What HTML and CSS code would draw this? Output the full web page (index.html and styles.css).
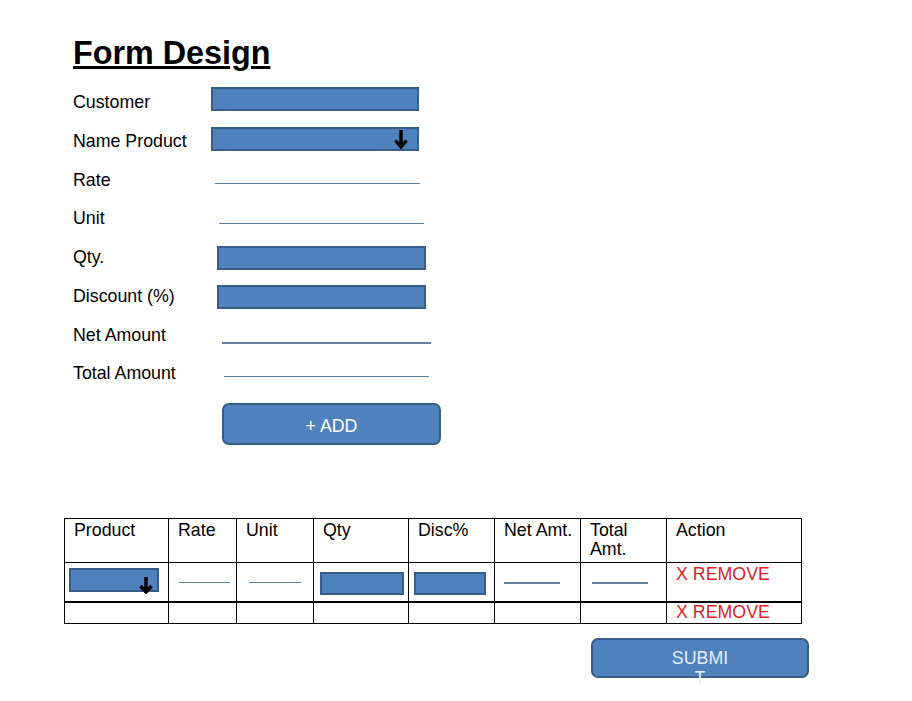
FILE: index.html
```html
<!DOCTYPE html>
<html lang="en">
<head>
<meta charset="utf-8">
<title>Form Design</title>
<link rel="stylesheet" href="styles.css">
</head>
<body>
<div class="page">
  <section class="top">
    <h1 class="title">Form Design</h1>
    <div class="form">
      <div class="row"><span class="label">Customer</span><span class="box f-customer"></span></div>
      <div class="row"><span class="label">Name Product</span>
        <span class="box select f-product">
          <svg class="arrow" width="14" height="20" viewBox="0 0 14 20"><path d="M7 1V18M1.5 11.5L7 18L12.5 11.5" fill="none" stroke="#000" stroke-width="3.4"/></svg>
        </span>
      </div>
      <div class="row"><span class="label">Rate</span><span class="line f-rate"></span></div>
      <div class="row"><span class="label">Unit</span><span class="line f-unit"></span></div>
      <div class="row"><span class="label">Qty.</span><span class="box f-qty"></span></div>
      <div class="row"><span class="label">Discount (%)</span><span class="box f-disc"></span></div>
      <div class="row"><span class="label">Net Amount</span><span class="line thick f-net"></span></div>
      <div class="row"><span class="label">Total Amount</span><span class="line f-total"></span></div>
    </div>
    <button class="btn btn-add" type="button">+ ADD</button>
  </section>

  <table class="grid">
    <colgroup>
      <col class="c-product"><col class="c-rate"><col class="c-unit"><col class="c-qty"><col class="c-disc"><col class="c-net"><col class="c-total"><col class="c-action">
    </colgroup>
    <thead>
      <tr>
        <th>Product</th><th>Rate</th><th>Unit</th><th>Qty</th><th>Disc%</th><th>Net Amt.</th><th>Total Amt.</th><th>Action</th>
      </tr>
    </thead>
    <tbody>
      <tr class="r-first">
        <td><span class="box select t-product">
          <svg class="arrow sm" width="14" height="17" viewBox="0 0 14 17"><path d="M7 0V15M1.5 9L7 15L12.5 9" fill="none" stroke="#000" stroke-width="3.4"/></svg>
        </span></td>
        <td><span class="line t-rate"></span></td>
        <td><span class="line t-unit"></span></td>
        <td><span class="box t-qty"></span></td>
        <td><span class="box t-disc"></span></td>
        <td><span class="line thick t-net"></span></td>
        <td><span class="line thick t-total"></span></td>
        <td class="act">X REMOVE</td>
      </tr>
      <tr class="r-second">
        <td></td><td></td><td></td><td></td><td></td><td></td><td></td>
        <td class="act">X REMOVE</td>
      </tr>
    </tbody>
  </table>

  <button class="btn btn-submit" type="button"><span class="btn-text">SUBMIT</span></button>
</div>
</body>
</html>
```

FILE: styles.css
```css
* { box-sizing: border-box; }

html, body {
  margin: 0;
  background: #fff;
}

body {
  font-family: "Liberation Sans", Arial, sans-serif;
  font-size: 17.8px;
  line-height: 20px;
  color: #000;
}

.page {
  padding: 35px 0 24px 64px;
}

.top {
  padding-left: 9px;
}

.title {
  margin: 0;
  font-size: 32.3px;
  line-height: 36px;
  font-weight: bold;
  text-decoration: underline;
  text-decoration-thickness: 3px;
  text-underline-offset: 2px;
}

.form {
  margin-top: 21px;
}

.row {
  display: grid;
  grid-template-columns: 138px auto;
  align-items: start;
  height: 38.75px;
}

.label {
  display: block;
  white-space: nowrap;
}

.box {
  display: block;
  background: #4f81bd;
  border: 2px solid #385d8a;
}

.line {
  display: block;
  height: 1px;
  background: #5f7f9f;
}

.line.thick {
  height: 2px;
}

.select {
  display: flex;
  justify-content: flex-end;
  align-items: center;
}

.arrow {
  display: block;
  flex: none;
}

/* top form fields */
.f-customer { width: 208px; height: 24px; margin-top: -5px; }
.f-product  { width: 208px; height: 24px; margin-top: -4px; padding-right: 9px; }
.f-rate     { width: 205px; margin-top: 13px; margin-left: 4px; }
.f-unit     { width: 205px; margin-top: 15px; margin-left: 8px; }
.f-qty      { width: 209px; height: 24px; margin-top: -1px; margin-left: 6px; }
.f-disc     { width: 209px; height: 24px; margin-top: -1px; margin-left: 6px; }
.f-net      { width: 209px; margin-top: 17px; margin-left: 11px; }
.f-total    { width: 205px; margin-top: 13px; margin-left: 13px; }

.btn {
  display: block;
  background: #4f81bd;
  border: 2px solid #385d8a;
  border-radius: 7px;
  color: #fff;
  font-family: "Liberation Sans", Arial, sans-serif;
  font-size: 17.8px;
  line-height: 20px;
  padding: 0;
  cursor: pointer;
}

.btn-add {
  width: 219px;
  height: 42px;
  margin: 1px 0 0 149px;
  padding: 3px 0 0 0;
}

/* table */
.grid {
  margin-top: 73px;
  border-collapse: collapse;
  table-layout: fixed;
  width: 737px;
}

.c-product { width: 104px; }
.c-rate    { width: 68px; }
.c-unit    { width: 77px; }
.c-qty     { width: 95px; }
.c-disc    { width: 86px; }
.c-net     { width: 86px; }
.c-total   { width: 86px; }
.c-action  { width: 135px; }

.grid th,
.grid td {
  border: 1px solid #000;
  padding: 0;
  vertical-align: top;
  text-align: left;
}

.grid th {
  font-weight: normal;
  height: 44px;
  padding: 2px 0 0 9px;
  line-height: 18.5px;
}

.r-first td {
  height: 39px;
  border-bottom: 2px solid #000;
}

.r-second td {
  height: 22px;
}

.grid td.act {
  color: #dd1f26;
  padding-left: 9px;
  white-space: nowrap;
}

.r-first td.act { padding-top: 1px; }
.r-second td.act { line-height: 19px; }

.t-product { width: 90px; height: 24px; margin: 5px 0 0 4px; padding-right: 4px; align-items: flex-end; }
.t-product .arrow { margin-bottom: -4px; }
.t-rate    { width: 51px; margin: 19px 0 0 10px; }
.t-unit    { width: 52px; margin: 19px 0 0 12px; }
.t-qty     { width: 84px; height: 23px; margin: 9px 0 0 6px; }
.t-disc    { width: 72px; height: 23px; margin: 9px 0 0 5px; }
.t-net     { width: 56px; margin: 19px 0 0 9px; }
.t-total   { width: 56px; margin: 19px 0 0 11px; }

.btn-submit {
  width: 218px;
  height: 40px;
  margin: 14px 0 0 527px;
  padding-top: 8px;
  color: #e4edf8;
  text-align: center;
  overflow: visible;
}

.btn-text {
  display: block;
  width: 60px;
  margin: 0 auto;
  word-break: break-all;
  line-height: 20px;
}
```
